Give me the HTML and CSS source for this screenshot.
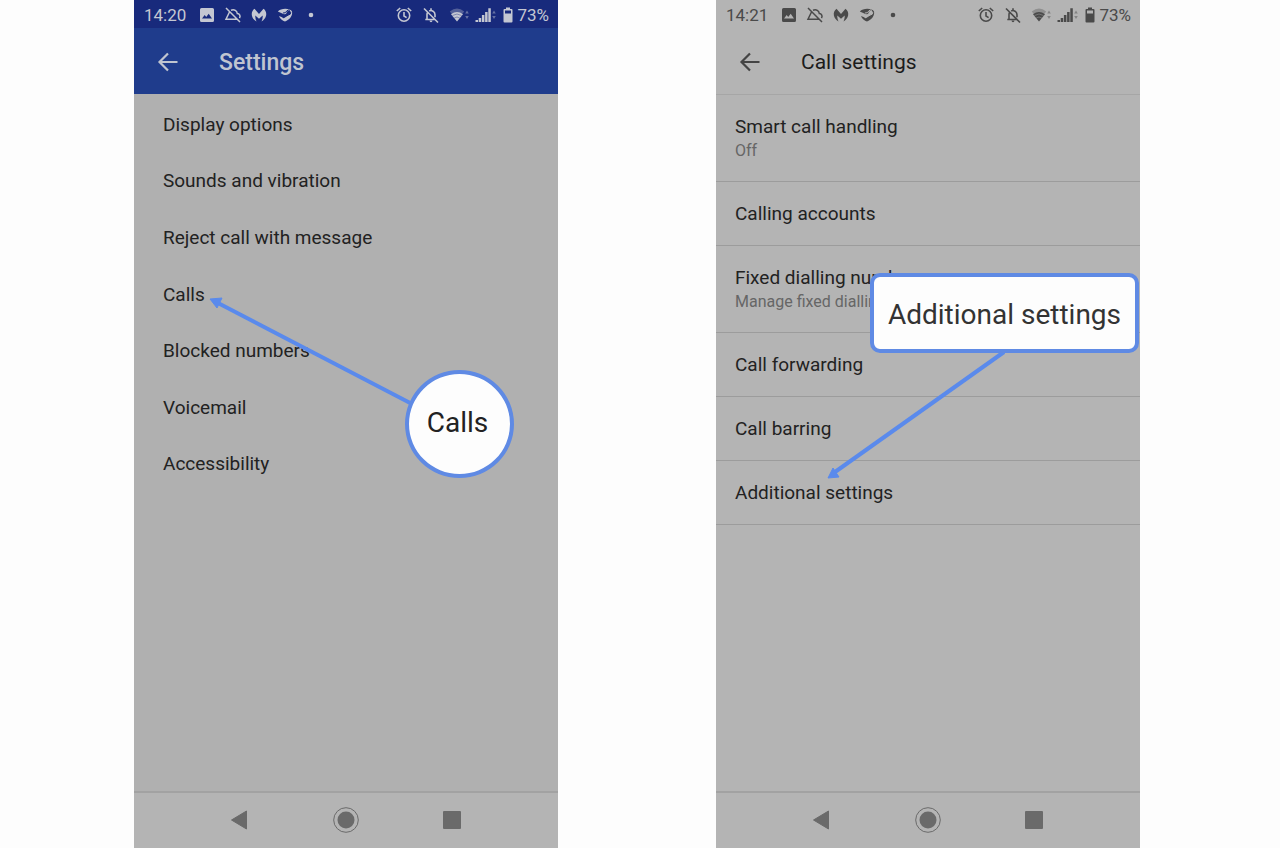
FILE: index.html
```
<!DOCTYPE html>
<html lang="en">

<head>
    <meta charset="utf-8">
    <title>Call settings guide</title>

    <link rel="stylesheet" href="styles.css">
</head>

<body>

    <!-- icons shared by both phones -->
    <svg class="sprite" aria-hidden="true">
        <symbol id="picture" viewBox="0 0 18 18">
            <path fill="currentColor" fill-rule="evenodd" d="M3.500 2h11Q16 2 16 3.500v11q0 1.500-1.500 1.500h-11Q2 16 2 14.500v-11Q2 2 3.500 2zM4 12.500h10l-3.300-4.700-2.500 3.200-1.500-1.900z"/>
        </symbol>
        <symbol id="cloud-off" viewBox="0 0 18 18">
            <path fill="none" stroke="currentColor" stroke-width="1.500" d="M2 2l14 14M7 4.200c3.300-1.400 6 .6 6.300 3.300 2.300.2 3.500 2.600 2.200 4.600M5.500 6L2 13.200h11"/>
        </symbol>
        <symbol id="m-logo" viewBox="0 0 18 18">
            <path fill="currentColor" d="M4.500 2.800L9 8l4.500-5.200c2.300 1.700 3.100 4.200 2.600 6.600-.5 2.400-2 4.500-4.600 6 .9-1.900 1.300-3.700 1.200-5.900L9 12.700 5.300 9.500c-.1 2.200.3 4 1.200 5.900-2.600-1.500-4.100-3.600-4.600-6-.5-2.400.3-4.900 2.600-6.600z"/>
        </symbol>
        <symbol id="disc" viewBox="0 0 18 18">
            <path fill="currentColor" d="M1.800 5.500L8 8.200l2-.2 1-2.300c1.200-1.500 3.700-1 3.900.8.100 1.700-1.300 2.500-2.800 2.500L9.500 11c-.6 1.500-2.700 1.500-3.300.3L3 10c1 3 3.500 4.800 6 5.500 4.500-1.500 8-6 7-10C14.500 2 5 1.500 1.800 5.500z"/>
            <path class="gap" d="M7 7l2.500-.3 1.200-1.700q1.400-1.500 3.200-.7M8 11.200l4.500-2.200q2-.3 2.300-2.500"/>
        </symbol>
        <symbol id="dot" viewBox="0 0 18 18">
            <circle cx="9" cy="9" r="2.300" fill="currentColor"/>
        </symbol>
        <symbol id="alarm" viewBox="0 0 18 18">
            <g fill="none" stroke="currentColor" stroke-width="1.600">
                <circle cx="9" cy="9.500" r="5.700"/>
                <path d="M9 6v4l2.600 1.600M1.800 5l3.400-3M16.200 5l-3.400-3"/>
            </g>
        </symbol>
        <symbol id="bell-off" viewBox="0 0 18 18">
            <path fill="none" stroke="currentColor" stroke-width="1.600" d="M2 2.500l14 14M3.300 13.500h9.700M5 13V8.500q0-1 .5-1.800M7.200 5Q9 4 11 5.200q2 1.300 2 3.500v2.500M9 2.300V4.500"/>
            <path fill="currentColor" d="M7.500 14.500h3Q10.300 16.300 9 16.300t-1.500-1.800z"/>
        </symbol>
        <symbol id="wifi" viewBox="0 0 22 18">
            <path fill="currentColor" opacity=".35" d="M.8 5.500Q8-.5 15.200 5.500l-2 2.500H2.800z"/>
            <path fill="currentColor" d="M8 15.500L2 8.300Q8 3.500 14 8.300z"/>
            <path class="cut" d="M3.500 9.500Q8 6.500 12.500 9.500M5.200 12Q8 10 10.800 12"/>
            <path fill="currentColor" opacity=".45" d="M16.200 7.500l1.800-3 1.800 3zM16.200 10l1.800 3 1.800-3z"/>
        </symbol>
        <symbol id="signal" viewBox="0 0 22 18">
            <path fill="currentColor" d="M.5 14h2.500v2H.5zM3.700 12h2.500v4H3.700zM6.900 9h2.500v7H6.900zM10.100 6h2.500v10h-2.500zM13.300 2.300h2.500V16h-2.500z"/>
            <path fill="currentColor" opacity=".45" d="M17.200 7.500l1.800-3 1.800 3zM17.200 10l1.800 3 1.800-3z"/>
        </symbol>
        <symbol id="battery" viewBox="0 0 10 18">
            <path fill="currentColor" fill-rule="evenodd" d="M3 1.500h4V3h1.500q1 0 1 1v11.500q0 1-1 1h-7q-1 0-1-1V4q0-1 1-1H3zM2 4.500v3h6v-3z"/>
        </symbol>
        <symbol id="arrow" viewBox="0 0 24 24">
            <path fill="none" stroke="currentColor" stroke-width="2.200" d="M22.500 12H5M13 3.500L4.500 12l8.500 8.500"/>
        </symbol>
        <symbol id="back" viewBox="0 0 26 26">
            <path fill="currentColor" stroke="currentColor" stroke-linejoin="round" d="M4.500 13l15-9v18z"/>
        </symbol>
        <symbol id="home" viewBox="0 0 26 26">
            <circle cx="13" cy="13" r="8.500" fill="currentColor"/>
            <circle cx="13" cy="13" r="12.300" fill="none" stroke="currentColor"/>
        </symbol>
        <symbol id="recent" viewBox="0 0 26 26">
            <rect x="4" y="4" width="18" height="18" rx="1" fill="currentColor"/>
        </symbol>
    </svg>

    <main>
        <section class="phone phone-settings">
            <div class="status">
                <span class="time">14:20</span>
                <svg><use href="#picture"/></svg>
                <svg><use href="#cloud-off"/></svg>
                <svg><use href="#m-logo"/></svg>
                <svg><use href="#disc"/></svg>
                <svg><use href="#dot"/></svg>
                <div class="status-right">
                    <svg><use href="#alarm"/></svg>
                    <svg><use href="#bell-off"/></svg>
                    <svg class="wide"><use href="#wifi"/></svg>
                    <svg class="wide"><use href="#signal"/></svg>
                    <svg class="narrow"><use href="#battery"/></svg>
                    <span>73%</span>
                </div>
            </div>
            <header>
                <button aria-label="Back"><svg><use href="#arrow"/></svg></button>
                <h1>Settings</h1>
            </header>
            <ul class="options">
                <li><a href="#">Display options</a></li>
                <li><a href="#">Sounds and vibration</a></li>
                <li><a href="#">Reject call with message</a></li>
                <li><a href="#">Calls</a></li>
                <li><a href="#">Blocked numbers</a></li>
                <li><a href="#">Voicemail</a></li>
                <li><a href="#">Accessibility</a></li>
            </ul>
            <nav>
                <button aria-label="Back"><svg><use href="#back"/></svg></button>
                <button aria-label="Home"><svg><use href="#home"/></svg></button>
                <button aria-label="Recent apps"><svg><use href="#recent"/></svg></button>
            </nav>
            <svg class="pointer" aria-hidden="true">
                <path class="line" d="M280 405L84 303"/>
                <path class="head" d="M76 299l12-1-5 10z"/>
            </svg>
            <div class="callout callout-round">Calls</div>
        </section>

        <section class="phone phone-calls">
            <div class="status">
                <span class="time">14:21</span>
                <svg><use href="#picture"/></svg>
                <svg><use href="#cloud-off"/></svg>
                <svg><use href="#m-logo"/></svg>
                <svg><use href="#disc"/></svg>
                <svg><use href="#dot"/></svg>
                <div class="status-right">
                    <svg><use href="#alarm"/></svg>
                    <svg><use href="#bell-off"/></svg>
                    <svg class="wide"><use href="#wifi"/></svg>
                    <svg class="wide"><use href="#signal"/></svg>
                    <svg class="narrow"><use href="#battery"/></svg>
                    <span>73%</span>
                </div>
            </div>
            <header>
                <button aria-label="Back"><svg><use href="#arrow"/></svg></button>
                <h1>Call settings</h1>
            </header>
            <ul class="rows">
                <li><a href="#">Smart call handling <small>Off</small></a></li>
                <li><a href="#">Calling accounts</a></li>
                <li><a href="#">Fixed dialling numbers <small>Manage fixed dialling numbers</small></a></li>
                <li><a href="#">Call forwarding</a></li>
                <li><a href="#">Call barring</a></li>
                <li><a href="#">Additional settings</a></li>
            </ul>
            <nav>
                <button aria-label="Back"><svg><use href="#back"/></svg></button>
                <button aria-label="Home"><svg><use href="#home"/></svg></button>
                <button aria-label="Recent apps"><svg><use href="#recent"/></svg></button>
            </nav>
            <svg class="pointer" aria-hidden="true">
                <path class="line" d="M288 352L119 472"/>
                <path class="head" d="M112 478l5-10 6 9z"/>
            </svg>
            <div class="callout callout-box">Additional settings</div>
        </section>
    </main>

</body>

</html>
```
FILE: styles.css
```
* {
    box-sizing: border-box;
}

body {
    margin: 0;
    background: #fdfdfd;
    font-family: Roboto, sans-serif;
}

.sprite {
    position: absolute;
    width: 0;
    height: 0;
}

main {
    display: flex;
    justify-content: center;
    gap: 158px;
    min-height: 100vh;
    padding-right: 6px;
}

.phone {
    --bar: #b4b4b4;
    position: relative;
    display: flex;
    flex-direction: column;
    flex: 0 1 424px;
    background: #b4b4b4;
    color: #222;
}

.phone-settings {
    --bar: #182a7c;
    background: #b0b0b0;
}

.status {
    display: flex;
    align-items: center;
    gap: 8px;
    height: 28px;
    padding: 1px 9px 0 10px;
    background: var(--bar);
    font-size: 17px;
    color: #4a4a4a;
}

.status svg {
    width: 18px;
    height: 18px;
}

.status svg.wide {
    width: 22px;
}

.status svg.narrow {
    width: 10px;
}

.time {
    width: 46px;
}

.status-right {
    display: flex;
    align-items: center;
    gap: 4px;
    margin-left: auto;
}

.status-right svg:first-child {
    margin-right: 5px;
}

.status-right svg:nth-child(2) {
    margin-right: 5px;
}

.status-right .narrow {
    margin-left: 2px;
}

.cut,
.gap {
    fill: none;
    stroke: var(--bar);
}

.cut {
    opacity: .4;
}

header {
    display: flex;
    align-items: center;
    height: 67px;
    padding: 2px 21px 0;
    border-bottom: 1px solid #a6a6a6;
    color: #444;
}

header button,
nav button {
    display: flex;
    padding: 0;
    border: 0;
    background: none;
    color: inherit;
}

header svg {
    width: 24px;
    height: 24px;
}

h1 {
    margin: 0 0 0 40px;
    font-size: 21px;
    font-weight: 400;
    color: #1c1c1c;
}

.phone-settings .status {
    color: #c4c7d2;
}

.phone-settings header {
    height: 66px;
    border: 0;
    background: #1f3c8c;
    color: #c0c5d0;
}

.phone-settings h1 {
    font-size: 23px;
    font-weight: 500;
    color: #c0c5d0;
}

ul {
    margin: 0;
    padding: 0;
    list-style: none;
    font-size: 19px;
}

ul a {
    display: block;
    color: inherit;
    text-decoration: none;
}

.options {
    display: flex;
    flex-direction: column;
    height: 398px;
    padding-top: 2px;
}

.options li {
    display: flex;
    flex: 1;
    align-items: center;
    padding: 0 29px;
}

.rows a {
    padding: 20px 19px 19px;
    border-bottom: 1px solid #9c9c9c;
    line-height: 24px;
}

.rows small {
    display: block;
    font-size: 16px;
    line-height: 23px;
    color: #666;
}

nav {
    display: flex;
    align-items: center;
    justify-content: center;
    gap: 80px;
    height: 57px;
    margin-top: auto;
    padding-bottom: 2px;
    border-top: 2px solid #a2a2a2;
    background: #b4b4b4;
    color: #6a6a6a;
}

nav svg {
    width: 26px;
    height: 26px;
}

.pointer {
    position: absolute;
    top: 0;
    left: 0;
    width: 100%;
    height: 100%;
    pointer-events: none;
}

.line {
    stroke: #5a8aec;
    stroke-width: 4;
}

.head {
    fill: #5a8aec;
    stroke: #5a8aec;
}

.callout {
    position: absolute;
    display: flex;
    align-items: center;
    justify-content: center;
    border: 4px solid #5f8ae4;
    background: #fdfdfd;
    font-size: 28px;
}

.callout-round {
    top: 370px;
    left: 271px;
    width: 109px;
    height: 108px;
    padding: 0 4px 4px 0;
    border-radius: 50%;
}

.callout-box {
    top: 273px;
    left: 154px;
    width: 269px;
    height: 80px;
    padding-top: 3px;
    border-radius: 10px;
    color: #333;
}
```
